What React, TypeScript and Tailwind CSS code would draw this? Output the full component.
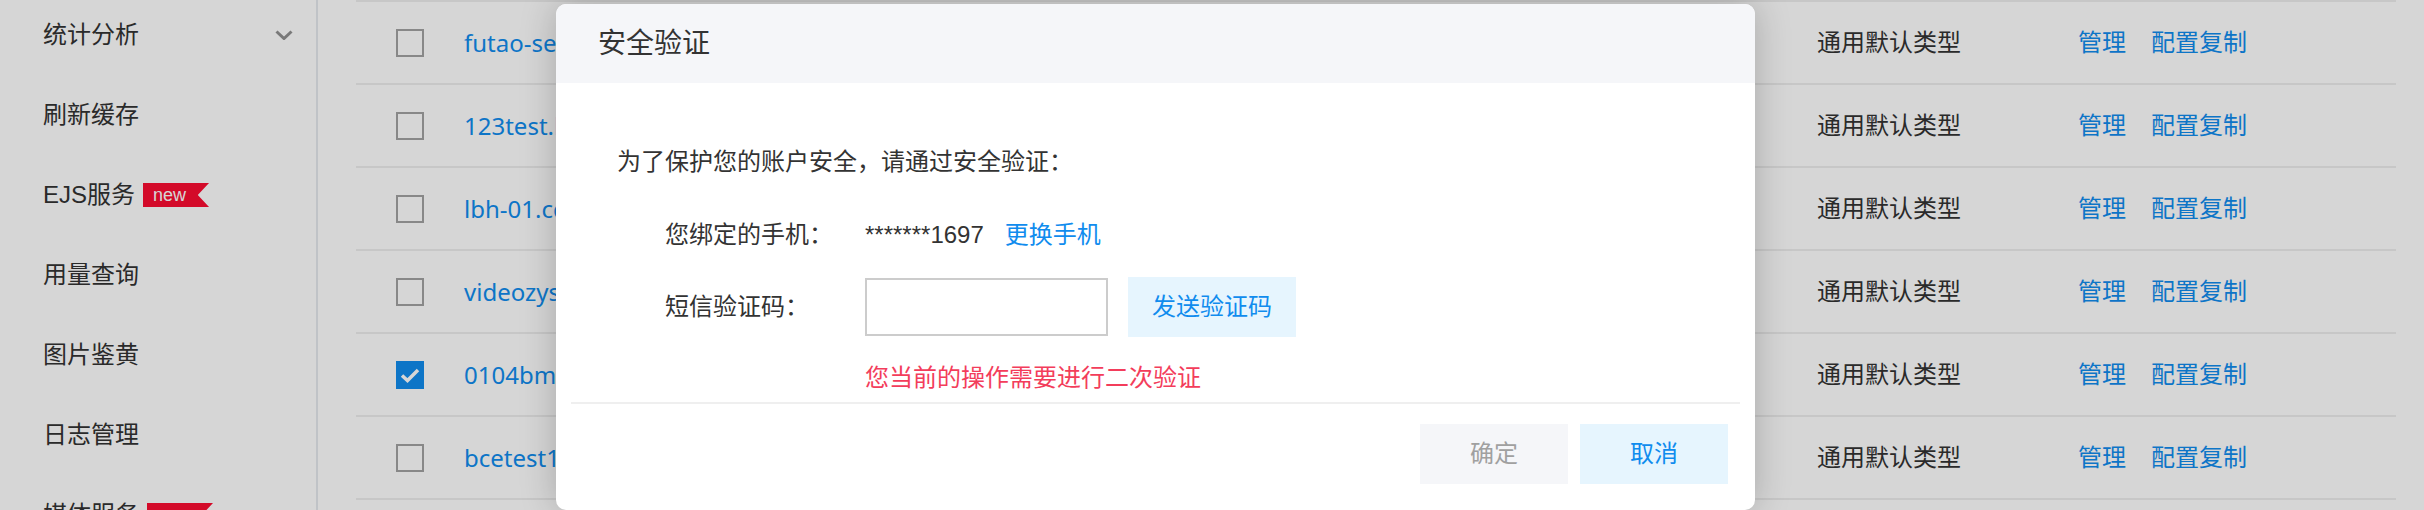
import React from "react";

type IMenuItem = {
  name: string;
  arrow?: boolean;
  isNew?: boolean;
};

const menu: IMenuItem[] = [
  { name: "统计分析", arrow: true },
  { name: "刷新缓存" },
  { name: "EJS服务", isNew: true },
  { name: "用量查询" },
  { name: "图片鉴黄" },
  { name: "日志管理" },
  { name: "媒体服务", isNew: true },
];

const domains = [
  { name: "futao-se.bcelive.com", checked: false },
  { name: "123test.bcedemo.com", checked: false },
  { name: "lbh-01.cdn.bcetest.com", checked: false },
  { name: "videozys.bcelive.com", checked: false },
  { name: "0104bmk.bcetest.com", checked: true },
  { name: "bcetest1.bcedemo.com", checked: false },
];

const NewBadge = () => (
  <span className="ml-[8px] flex h-[24px] w-[66px] items-center bg-[#fc0c32] pl-[10px] text-[18px] leading-none text-white [clip-path:polygon(0_0,100%_0,83%_50%,100%_100%,0_100%)]">
    new
  </span>
);

const Chevron = () => (
  <svg width="18" height="10" viewBox="0 0 18 10" fill="none" className="ml-auto">
    <path d="M1.5 1.5 L9 8.5 L16.5 1.5" stroke="#919191" strokeWidth="3" />
  </svg>
);

const Checkbox = ({ checked }: { checked: boolean }) =>
  checked ? (
    <span className="flex h-[28px] w-[28px] items-center justify-center bg-[#108cee]">
      <svg width="20" height="16" viewBox="0 0 20 16" fill="none">
        <path d="M2 8.5 L7.5 13.5 L18 3" stroke="#ffffff" strokeWidth="3.5" />
      </svg>
    </span>
  ) : (
    <span className="block h-[28px] w-[28px] border-2 border-[#a3a3a3] bg-white" />
  );

export default function App() {
  return (
    <div className="relative flex h-[510px] w-[2424px] overflow-hidden bg-white font-['Liberation_Sans','Noto_Sans_CJK_SC',sans-serif] text-[24px] text-[#333]">
      {/* sidebar */}
      <div className="w-[318px] shrink-0 border-r-2 border-[#e5e9ee]">
        <div className="-mt-[5px] flex flex-col">
          {menu.map((item) => (
            <div key={item.name} className="flex h-[80px] items-center pl-[43px] pr-[23px]">
              <span>{item.name}</span>
              {item.isNew ? <NewBadge /> : null}
              {item.arrow ? <Chevron /> : null}
            </div>
          ))}
        </div>
      </div>

      {/* domain table */}
      <div className="flex-1 pl-[38px] pr-[28px]">
        <div className="border-t-2 border-[#eeeeee]">
          {domains.map((d) => (
            <div key={d.name} className="flex h-[83px] items-center border-b-2 border-[#eeeeee]">
              <div className="w-[108px] shrink-0 pl-[40px]">
                <Checkbox checked={d.checked} />
              </div>
              <div className="w-[1353px] shrink-0 font-['Noto_Sans','Noto_Sans_CJK_SC',sans-serif] text-[#108cee]">
                {d.name}
              </div>
              <div className="w-[261px] shrink-0">通用默认类型</div>
              <div className="flex gap-[25px] text-[#108cee]">
                <span>管理</span>
                <span>配置复制</span>
              </div>
            </div>
          ))}
        </div>
      </div>

      {/* modal mask */}
      <div className="absolute inset-0 bg-black/[0.16]" />

      {/* security dialog */}
      <div className="absolute left-[556px] top-[4px] w-[1199px] overflow-hidden rounded-[10px] bg-white shadow-[0_0_36px_rgba(0,0,0,0.22)]">
        <div className="flex h-[79px] items-center bg-[#f5f6f9] pl-[42px] text-[28px] text-[#333]">安全验证</div>

        <div className="pl-[61px] pt-[61px] leading-[36px]">为了保护您的账户安全，请通过安全验证：</div>

        <div className="mt-[37px] flex pl-[109px] leading-[36px]">
          <span className="w-[200px] shrink-0">您绑定的手机：</span>
          <span>*******1697</span>
          <span className="ml-[21px] text-[#108cee]">更换手机</span>
        </div>

        <div className="mt-[24px] flex h-[60px] items-center pl-[109px]">
          <span className="w-[200px] shrink-0">短信验证码：</span>
          <input readOnly className="h-[58px] w-[243px] border-2 border-[#cccccc] bg-white outline-none" />
          <button className="ml-[20px] h-[60px] w-[168px] bg-[#e6f5fe] text-[#108cee]">发送验证码</button>
        </div>

        <div className="mt-[23px] pl-[309px] leading-[36px] text-[#f33d5b]">您当前的操作需要进行二次验证</div>

        <div className="mx-[15px] mt-[6px] h-[2px] bg-[#efefef]" />

        <div className="mt-[20px] flex justify-end gap-[12px] pb-[26px] pr-[27px]">
          <button className="h-[60px] w-[148px] bg-[#f5f6f9] text-[#a0a0a0]">确定</button>
          <button className="h-[60px] w-[148px] bg-[#e6f5fe] text-[#108cee]">取消</button>
        </div>
      </div>
    </div>
  );
}
